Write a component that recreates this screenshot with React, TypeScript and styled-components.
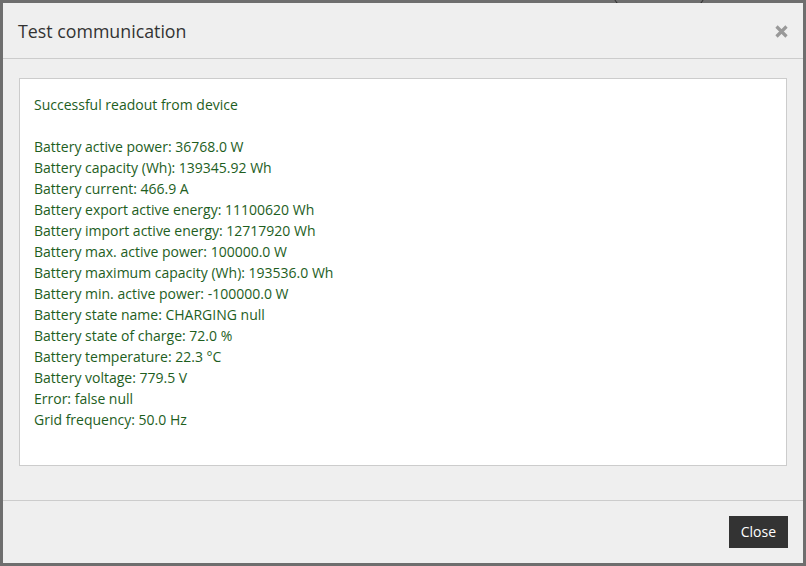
import React from "react";
import styled, { createGlobalStyle } from "styled-components";

const Global = createGlobalStyle`
  html, body { margin: 0; padding: 0; }
  body { font-family: "Open Sans", "Liberation Sans", sans-serif; }
`;

const Backdrop = styled.div`
  position: relative;
  width: 806px;
  height: 566px;
  background: #6e6e6e;
  padding: 3px;
  box-sizing: border-box;
  overflow: hidden;
`;

const PeekPill = styled.div`
  position: absolute;
  top: -14px;
  left: 614px;
  width: 88px;
  height: 18px;
  border: 1px solid #2a2a2a;
  border-radius: 9px;
  background: #6e6e6e;
`;

const Modal = styled.div`
  position: relative;
  width: 800px;
  height: 560px;
  background: #efefef;
  display: flex;
  flex-direction: column;
`;

const Header = styled.div`
  height: 56px;
  flex: none;
  box-sizing: border-box;
  padding: 2px 14px 0 15px;
  display: flex;
  align-items: center;
  justify-content: space-between;
  border-bottom: 1px solid #cccccc;
`;

const Title = styled.h4`
  margin: 0;
  font-size: 17.8px;
  font-weight: 400;
  color: #333333;
  line-height: 1;
`;

const CloseX = styled.button`
  border: none;
  background: none;
  padding: 0;
  width: 15px;
  height: 15px;
  display: flex;
  align-items: center;
  justify-content: center;
  cursor: pointer;
`;

const Body = styled.div`
  flex: 1;
  padding: 19px 16px 34px 16px;
  display: flex;
`;

const Output = styled.div`
  flex: 1;
  background: #ffffff;
  border: 1px solid #cccccc;
  padding: 15px 14px 34px 14px;
  font-size: 14px;
  line-height: 21px;
  color: #1e5e1e;
  white-space: pre-wrap;
`;

const Footer = styled.div`
  height: 63px;
  flex: none;
  box-sizing: border-box;
  border-top: 1px solid #cccccc;
  padding: 15px 15px 0 15px;
  display: flex;
  justify-content: flex-end;
  align-items: flex-start;
`;

const Button = styled.button`
  height: 32px;
  padding: 0 12px;
  background: #333333;
  color: #ffffff;
  border: none;
  font-family: "Open Sans", "Liberation Sans", sans-serif;
  font-size: 14px;
  line-height: 32px;
  cursor: pointer;
`;

const lines = [
  "Successful readout from device",
  "",
  "Battery active power: 36768.0 W",
  "Battery capacity (Wh): 139345.92 Wh",
  "Battery current: 466.9 A",
  "Battery export active energy: 11100620 Wh",
  "Battery import active energy: 12717920 Wh",
  "Battery max. active power: 100000.0 W",
  "Battery maximum capacity (Wh): 193536.0 Wh",
  "Battery min. active power: -100000.0 W",
  "Battery state name: CHARGING null",
  "Battery state of charge: 72.0 %",
  "Battery temperature: 22.3 °C",
  "Battery voltage: 779.5 V",
  "Error: false null",
  "Grid frequency: 50.0 Hz",
];

export default function App() {
  return (
    <>
      <Global />
      <Backdrop>
        <PeekPill />
        <Modal>
          <Header>
            <Title>Test communication</Title>
            <CloseX aria-label="Close">
              <svg width="15" height="15" viewBox="0 0 15 15">
                <path d="M2.5 2.5 L12.5 12.5 M12.5 2.5 L2.5 12.5" stroke="#999999" strokeWidth="3.2" strokeLinecap="butt" />
              </svg>
            </CloseX>
          </Header>
          <Body>
            <Output>{lines.join("\n")}</Output>
          </Body>
          <Footer>
            <Button>Close</Button>
          </Footer>
        </Modal>
      </Backdrop>
    </>
  );
}
